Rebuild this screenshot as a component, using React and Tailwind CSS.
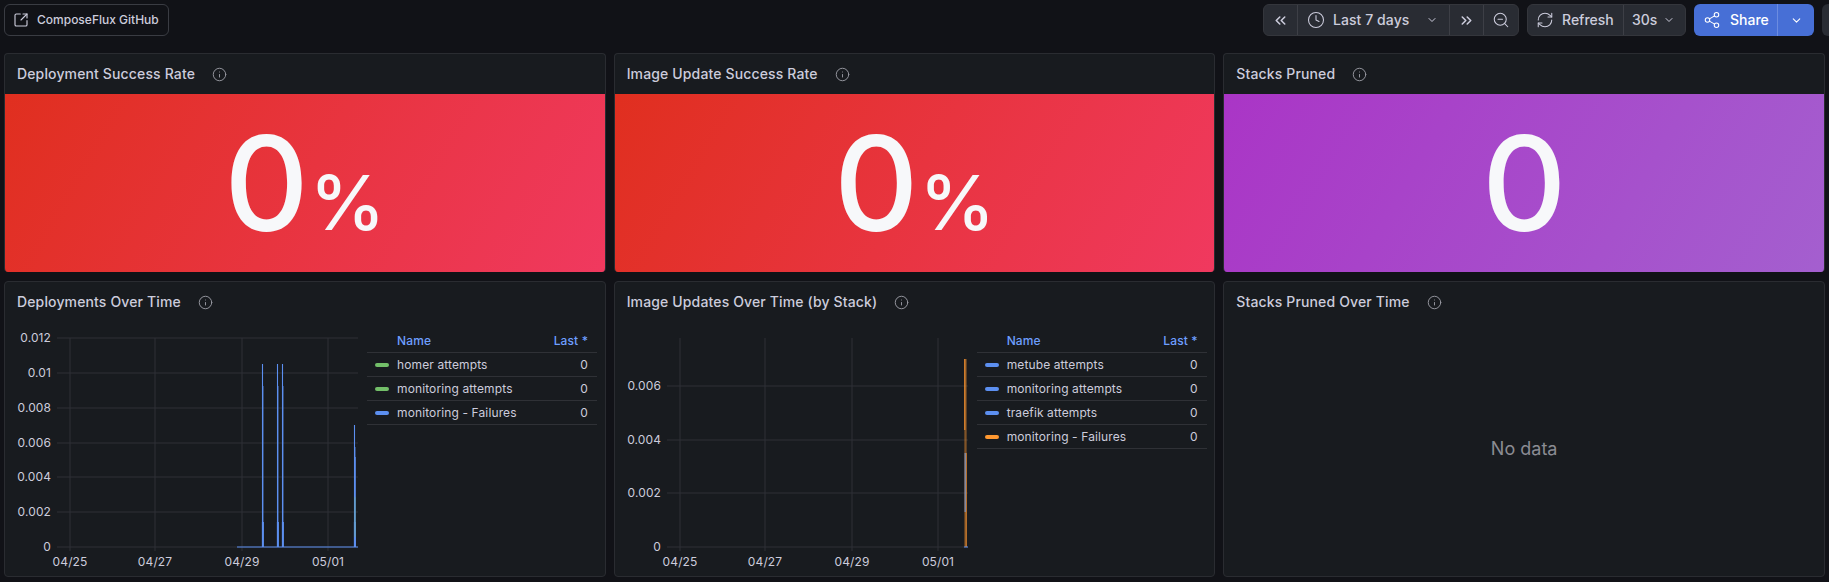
import React from "react";
import { ChevronDown, ChevronsLeft, ChevronsRight, Clock, Info, RefreshCw, Share2, SquareArrowOutUpRight, ZoomOut } from "lucide-react";

const FONT = "font-['Inter',sans-serif]";
const BLUE = "#5c8ff0";

const chartOne = {
  yTicks: [
    ["0.012", 338],
    ["0.01", 373],
    ["0.008", 408],
    ["0.006", 443],
    ["0.004", 477],
    ["0.002", 512],
    ["0", 547],
  ],
  legend: [
    ["homer attempts", "bg-[#73bf69]"],
    ["monitoring attempts", "bg-[#73bf69]"],
    ["monitoring - Failures", "bg-[#5c8ff0]"],
  ],
};

const chartTwo = {
  yTicks: [
    ["0.006", 386],
    ["0.004", 440],
    ["0.002", 493],
    ["0", 547],
  ],
  legend: [
    ["metube attempts", "bg-[#5c8ff0]"],
    ["monitoring attempts", "bg-[#5c8ff0]"],
    ["traefik attempts", "bg-[#5c8ff0]"],
    ["monitoring - Failures", "bg-[#ff9830]"],
  ],
};

const xTicks = [
  ["04/25", 65],
  ["04/27", 150],
  ["04/29", 237],
  ["05/01", 323],
];

const PanelTitle = ({ title }) => (
  <div className="flex h-10 shrink-0 items-center gap-[17px] pl-[12px]">
    <span className="text-sm font-medium tracking-[0.01em] text-[#ccccdc]">{title}</span>
    <Info size={15} strokeWidth={1.5} className="text-[#9a9ba3]" />
  </div>
);

const StatPanel = ({ title, value, unit, bg }) => (
  <div className="flex h-[219px] flex-col overflow-hidden rounded-[4px] border border-b-0 border-[#2a2c31] bg-[#181b1f]">
    <PanelTitle title={title} />
    <div className={`flex flex-1 items-center justify-center gap-[1px] ${bg}`}>
      <span className="text-[131px] leading-none font-[550] text-[#f7f8fa]">{value}</span>
      {unit && <span className="mt-[38px] text-[76px] leading-none font-[550] text-[#f7f8fa]">{unit}</span>}
    </div>
  </div>
);

// svg coordinates: screen x - 5, screen y - 322
const TimeChart = ({ yTicks, children }) => (
  <svg width="358" height="254" className="shrink-0">
    {yTicks.map(([label, y]) => (
      <g key={label}>
        <text x="46" y={y - 322 + 4} textAnchor="end" fontSize="12" letterSpacing="0.1" fill="#ccccdc">
          {label}
        </text>
        <line x1="52" x2="353" y1={y - 322} y2={y - 322} stroke="#2f3136" />
      </g>
    ))}
    {xTicks.map(([label, x]) => (
      <g key={label}>
        <line x1={x} x2={x} y1="16" y2="229" stroke="#2f3136" />
        <text x={x} y="244" textAnchor="middle" fontSize="12" letterSpacing="0.1" fill="#ccccdc">
          {label}
        </text>
      </g>
    ))}
    {children}
  </svg>
);

const Legend = ({ items }) => (
  <div className="ml-[4px] w-[230px] text-xs tracking-[0.01em] text-[#ccccdc]">
    <div className="flex h-[31px] items-end justify-between border-b border-[#2f3136] pr-[9px] pb-[3px] pl-[30px] font-medium text-[#6e9fff]">
      <span>Name</span>
      <span>Last *</span>
    </div>
    {items.map(([name, color]) => (
      <div key={name} className="flex h-[24px] items-center border-b border-[#2f3136] pr-[9px] pl-[8px]">
        <span className={`h-[4px] w-[14px] rounded-full ${color}`} />
        <span className="ml-[8px] flex-1">{name}</span>
        <span>0</span>
      </div>
    ))}
  </div>
);

const ChartPanel = ({ title, chart, children }) => (
  <div className="flex h-[296px] flex-col rounded-[4px] border border-[#2a2c31] bg-[#181b1f]">
    <PanelTitle title={title} />
    <div className="flex">
      <TimeChart yTicks={chart.yTicks}>{children}</TimeChart>
      <Legend items={chart.legend} />
    </div>
  </div>
);

const Spike = ({ x, top }) => (
  <g stroke={BLUE} fill="none">
    <path d={`M${x} 225V${top}`} strokeWidth="1.1" />
    <path d={`M${x + 0.2} 225V${top + 22}`} strokeWidth="1.4" />
    <path d={`M${x + 0.4} 225V200`} strokeWidth="2" />
  </g>
);

const Segment = ({ className = "", children }) => (
  <div className={`flex h-full items-center justify-center border-r border-[#3d3f46] last:border-r-0 ${className}`}>{children}</div>
);

const Toolbar = () => (
  <div className="flex h-8 items-center justify-between pl-1 text-sm text-[#ccccdc]">
    <button className="flex h-8 w-[165px] items-center gap-[8px] rounded-md border border-[#3a3c43] pl-[8px] text-xs font-medium">
      <SquareArrowOutUpRight size={16} strokeWidth={1.7} />
      ComposeFlux GitHub
    </button>
    <div className="flex h-8 items-center">
      <div className="flex h-8 w-[256px] items-center rounded-md border border-[#34363c] bg-[#292c33] font-medium">
        <Segment className="w-[34px]">
          <ChevronsLeft size={17} strokeWidth={2.2} />
        </Segment>
        <Segment className="w-[152px] justify-start pl-[9px]">
          <Clock size={18} strokeWidth={1.4} />
          <span className="ml-[8px] tracking-[0.005em]">Last 7 days</span>
          <ChevronDown size={12} strokeWidth={2} className="ml-[17px]" />
        </Segment>
        <Segment className="w-[34px]">
          <ChevronsRight size={17} strokeWidth={2.2} />
        </Segment>
        <Segment className="flex-1">
          <ZoomOut size={18} strokeWidth={1.4} />
        </Segment>
      </div>
      <div className="ml-[8px] flex h-8 w-[159px] items-center rounded-md border border-[#34363c] bg-[#292c33] font-medium">
        <Segment className="w-[96px] justify-start pl-[8px]">
          <RefreshCw size={18} strokeWidth={1.4} />
          <span className="ml-[8px]">Refresh</span>
        </Segment>
        <Segment className="flex-1 justify-start pl-[8px]">
          <span>30s</span>
          <ChevronDown size={12} strokeWidth={2} className="ml-[6px]" />
        </Segment>
      </div>
      <div className="ml-[8px] flex h-8 w-[120px] items-center rounded-md bg-[#476fd6] font-medium text-white">
        <div className="flex h-full w-[84px] items-center border-r border-[#6c8ce0] pl-[9px]">
          <Share2 size={18} strokeWidth={1.4} />
          <span className="ml-[9px]">Share</span>
        </div>
        <div className="flex flex-1 justify-center">
          <ChevronDown size={13} strokeWidth={2} />
        </div>
      </div>
      <div className="ml-[8px] h-8 w-[7px] rounded-l-md bg-[#292c33]" />
    </div>
  </div>
);

export default function App() {
  return (
    <div className={`h-[582px] w-[1829px] overflow-hidden bg-[#111217] pt-1 ${FONT}`}>
      <Toolbar />
      <div className="mt-[17px] grid grid-cols-3 gap-x-2 gap-y-[9px] px-1">
        <StatPanel title="Deployment Success Rate" value="0" unit="%" bg="bg-[linear-gradient(120deg,#e02f1f,#f0395f)]" />
        <StatPanel title="Image Update Success Rate" value="0" unit="%" bg="bg-[linear-gradient(120deg,#e02f1f,#f0395f)]" />
        <StatPanel title="Stacks Pruned" value="0" bg="bg-[linear-gradient(120deg,#aa35c6,#a45fcf)]" />

        <ChartPanel title="Deployments Over Time" chart={chartOne}>
          <path d="M232 225H353" stroke={BLUE} strokeWidth="1.2" fill="none" />
          <Spike x={257.5} top={42} />
          <Spike x={272.5} top={42} />
          <Spike x={277.5} top={42} />
          <Spike x={349.5} top={103} />
          <path d="M350.5 225V135" stroke={BLUE} strokeWidth="1" fill="none" opacity="0.7" />
          <path d="M350 215V175" stroke="#73bf69" strokeWidth="1" fill="none" opacity="0.5" />
        </ChartPanel>
        <ChartPanel title="Image Updates Over Time (by Stack)" chart={chartTwo}>
          <path d="M350.5 225V37" stroke="#ff9830" strokeWidth="2.3" fill="none" opacity="0.45" />
          <path d="M349.8 108V37" stroke="#ff9830" strokeWidth="1" fill="none" />
          <path d="M351.2 225V131" stroke="#ff9830" strokeWidth="0.8" fill="none" />
          <path d="M350.2 190V131" stroke="#7d8fb8" strokeWidth="1.3" fill="none" />
          <path d="M349 225H353" stroke={BLUE} strokeWidth="1" fill="none" />
        </ChartPanel>
        <div className="flex h-[296px] flex-col rounded-[4px] border border-[#2a2c31] bg-[#181b1f]">
          <PanelTitle title="Stacks Pruned Over Time" />
          <div className="flex flex-1 items-center justify-center text-lg text-[#8b8c93]">No data</div>
        </div>
      </div>
    </div>
  );
}
